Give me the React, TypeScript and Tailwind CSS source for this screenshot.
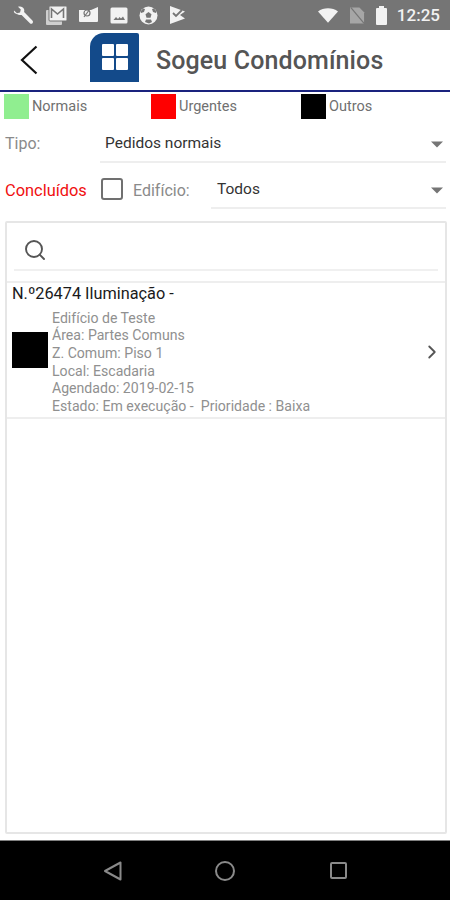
import React from "react";
import { ChevronRight, Search } from "lucide-react";

const Caret = ({ className }: { className: string }) => (
  <svg width="14" height="7" viewBox="0 0 14 7" className={`shrink-0 ${className}`}>
    <path d="M1 0.5h12L7 6.5z" fill="#757575" />
  </svg>
);

const StatusBar = () => (
  <div className="h-[30px] shrink-0 bg-[#757575] flex items-center pl-[13px] pr-[10px] text-[#f2f2f2]">
    <div className="flex items-center gap-[11px]">
      <svg width="21" height="21" viewBox="0 0 21 21" fill="#f2f2f2">
        <path d="M1 5.5 4 8.2 7 7.5 7.8 4.5 5 1.8C7.4.8 10 1.7 11 4c.4 1 .4 2 .1 3l8.3 8.6c.8.9.8 1.8.1 2.6-.8.8-1.8.8-2.6 0L8.6 9.9c-1 .3-2.2.3-3.2-.2C2.9 8.7.3 8 1 5.5z" />
      </svg>
      <svg width="22" height="22" viewBox="0 0 22 22" fill="none">
        <rect x="1" y="6" width="16" height="15" rx="1" fill="#cfcfcf" />
        <rect x="4" y="2" width="18" height="15" rx="1" fill="#f2f2f2" stroke="#757575" />
        <path d="M6.5 14V5l6 5 6-5v9" stroke="#757575" strokeWidth="1.6" />
      </svg>
      <svg width="21" height="18" viewBox="0 0 21 18" fill="none">
        <path d="M1 4h12l7-3v14a1 1 0 0 1-1 1H2a1 1 0 0 1-1-1z" fill="#f2f2f2" />
        <circle cx="9" cy="7" r="3" stroke="#757575" strokeWidth="1.2" />
        <path d="M6 11l6-8" stroke="#757575" strokeWidth="1.2" />
      </svg>
      <svg width="18" height="17" viewBox="0 0 18 17">
        <rect x="0.5" y="0.5" width="17" height="16" rx="1.5" fill="#f2f2f2" />
        <path d="M3.5 13l2.5-3 2 2 1.5-2 1.500 1.500 2-2 2 3.500z" fill="#757575" />
      </svg>
      <svg width="19" height="19" viewBox="0 0 19 19">
        <circle cx="9.500" cy="9.500" r="9" fill="#f2f2f2" />
        <path d="M9.500 6l3 2.200-1 3.500h-4l-1-3.500zM2 7l3-1 1-3-2-.5-2.500 3zM17 7l-3-1-1-3 2-.5 2.500 3zM6 16l1-2.500h5l1 2.500-3 1.500z" fill="#757575" />
      </svg>
      <svg width="17" height="20" viewBox="0 0 17 20" fill="none">
        <path d="M1 1l15 5.500-5 3.500 5 3.500L1 19z" fill="#f2f2f2" />
        <path d="M4 8l3 3 6-6" stroke="#757575" strokeWidth="1.800" />
      </svg>
    </div>
    <div className="ml-auto flex items-center">
      <svg width="20" height="15" viewBox="0 0 22 16">
        <path d="M0 3.500C6-1.200 16-1.200 22 3.500L11 16z" fill="#f2f2f2" />
      </svg>
      <svg width="15" height="17" viewBox="0 0 16 17" className="ml-[12px]">
        <path d="M0 0h10l5 5v12H0z" fill="#a6a6a6" />
        <path d="M1 0l14 17" stroke="#757575" strokeWidth="1.300" />
      </svg>
      <svg width="11" height="19" viewBox="0 0 11 19" className="ml-[11px]">
        <path d="M3 2V0h5v2h2a1 1 0 0 1 1 1v15a1 1 0 0 1-1 1H1a1 1 0 0 1-1-1V3a1 1 0 0 1 1-1z" fill="#f2f2f2" />
      </svg>
      <span className="ml-[10px] text-[17px] font-medium leading-none font-['Roboto',sans-serif]">12:25</span>
    </div>
  </div>
);

const Header = () => (
  <div className="h-[60px] shrink-0 flex items-center">
    <div className="w-[90px] pl-[19px] shrink-0">
      <svg width="20" height="30" viewBox="0 0 20 30" fill="none">
        <path d="M17.500 1.500 3 15l14.500 13.500" stroke="#111" strokeWidth="2.200" />
      </svg>
    </div>
    <div className="w-[49px] h-[49px] bg-[#134a8a] rounded-tl-[14px] rounded-tr-[2px] mb-[6px] shrink-0 flex items-center justify-center">
      <div className="grid grid-cols-2 gap-[2px]">
        <div className="w-[12px] h-[12px] bg-white rounded-[1px]" />
        <div className="w-[12px] h-[12px] bg-white rounded-[1px]" />
        <div className="w-[12px] h-[12px] bg-white rounded-[1px]" />
        <div className="w-[12px] h-[12px] bg-white rounded-[1px]" />
      </div>
    </div>
    <h1 className="ml-[17px] text-[25px] tracking-[0.12px] font-medium text-[#555555] mt-[2px]">
      Sogeu Condomínios
    </h1>
  </div>
);

const LegendItem = ({ color, label, width }: { color: string; label: string; width: string }) => (
  <div className={`flex items-center gap-[3px] ${width}`}>
    <div className={`w-[25px] h-[25px] ${color}`} />
    <span className="text-[14.5px] text-[#707070] leading-none mt-[1px]">{label}</span>
  </div>
);

const Row = ({ children }: { children: React.ReactNode }) => (
  <div className="flex items-center justify-between flex-1 h-full border-b-2 border-[#eeeeee] pr-[2px]">
    {children}
  </div>
);

const lines = [
  "Edifício de Teste",
  "Área: Partes Comuns",
  "Z. Comum: Piso 1",
  "Local: Escadaria",
  "Agendado: 2019-02-15",
  "Estado: Em execução -  Prioridade : Baixa",
];

export default function App() {
  return (
    <div className="w-[450px] h-[900px] flex flex-col bg-white overflow-hidden font-['Roboto',sans-serif]">
      <StatusBar />
      <Header />
      <div className="h-[2px] shrink-0 bg-[#1a237e]" />

      <div className="shrink-0 flex pl-[4px] pt-[2px]">
        <LegendItem color="bg-[#90ee90]" label="Normais" width="w-[147px]" />
        <LegendItem color="bg-[#ff0000]" label="Urgentes" width="w-[150px]" />
        <LegendItem color="bg-[#000000]" label="Outros" width="w-[100px]" />
      </div>

      <div className="shrink-0 flex items-center h-[44px] pl-[5px] pr-[4px]">
        <span className="w-[95px] text-[16px] text-[#8a8a8a] mt-[6px]">Tipo:</span>
        <Row>
          <span className="pl-[5px] text-[15.5px] text-[#333333] mt-[8px]">Pedidos normais</span>
          <Caret className="mt-[8px]" />
        </Row>
      </div>

      <div className="shrink-0 flex items-center h-[46px] pl-[5px] pr-[4px]">
        <span className="w-[96px] text-[16.4px] text-[#f01010] mt-[10px]">Concluídos</span>
        <div className="w-[22px] h-[22px] border-2 border-[#707070] rounded-[3px] shrink-0 mt-[6px]" />
        <span className="ml-[10px] w-[78px] text-[16px] text-[#8a8a8a] mt-[10px]">Edifício:</span>
        <Row>
          <span className="pl-[6px] text-[15.5px] text-[#333333] mt-[10px]">Todos</span>
          <Caret className="mt-[10px]" />
        </Row>
      </div>

      <div className="flex-none h-[613px] mt-[12px] ml-[5px] w-[442px] border-2 border-[#e6e6e6] rounded-[2px] flex flex-col">
        <div className="h-[60px] shrink-0 border-b-2 border-[#eeeeee]">
          <div className="mx-[7px] h-[48px] border-b-2 border-[#f0f0f0] flex items-center pl-[9px] pt-[8px]">
            <Search size={24} strokeWidth={1.900} className="text-[#555555]" />
          </div>
        </div>
        <div className="border-b-2 border-[#eeeeee] h-[136px] shrink-0 pl-[5px] pr-[2px] flex flex-col">
          <div className="text-[16.3px] text-[#1a1a1a] leading-[20px] mt-[1px]">N.º26474 Iluminação -</div>
          <div className="flex items-center flex-1">
            <div className="w-[36px] h-[36px] bg-black shrink-0 mb-[21px]" />
            <div className="ml-[4px] text-[14.100px] leading-[17.600px] text-[#909090] flex-1 mt-[4px]">
              {lines.map((l) => (
                <div key={l} className="whitespace-pre">{l}</div>
              ))}
            </div>
            <ChevronRight size={22} strokeWidth={2} className="text-[#555555] mb-[18px]" />
          </div>
        </div>
      </div>

      <div className="mt-auto h-[60px] shrink-0 bg-black border-t border-[#808080] flex items-center justify-center gap-[90px] pl-[2px]">
        <svg width="20" height="22" viewBox="0 0 20 22" fill="none">
          <path d="M2 11 17.500 2.500v17z" stroke="#8a8a8a" strokeWidth="2" strokeLinejoin="round" />
        </svg>
        <svg width="22" height="22" viewBox="0 0 22 22" fill="none" className="ml-[1px]">
          <circle cx="11" cy="11" r="9" stroke="#8a8a8a" strokeWidth="2" />
        </svg>
        <svg width="20" height="20" viewBox="0 0 20 20" fill="none" className="ml-[3px]">
          <rect x="2" y="2" width="15" height="15" rx="1" stroke="#8a8a8a" strokeWidth="2" />
        </svg>
      </div>
    </div>
  );
}
